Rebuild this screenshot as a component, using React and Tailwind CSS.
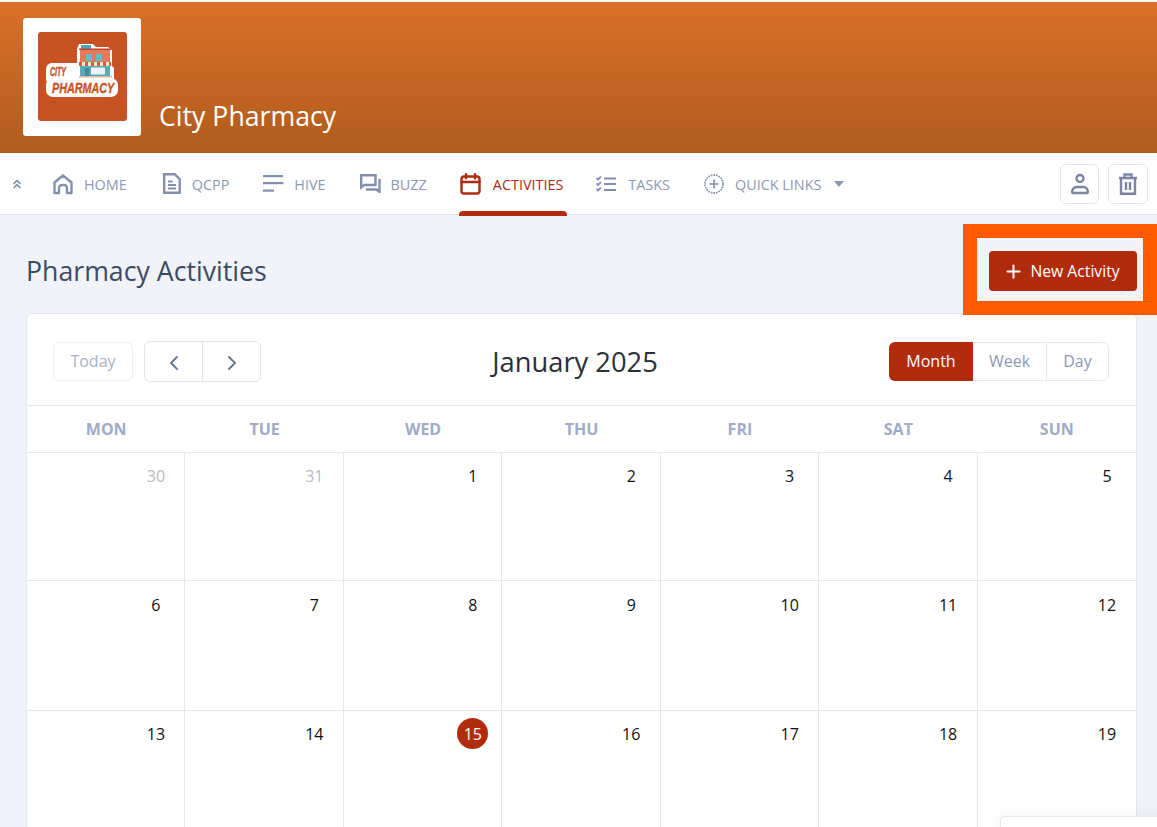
import React from "react";
import { ChevronLeft, ChevronRight, Plus, ChevronsUp } from "lucide-react";

const sans = "font-['Open_Sans','Noto_Sans',sans-serif]";

function Logo() {
  return (
    <svg viewBox="0 0 89 89" className="w-[89px] h-[89px] block">
      <rect width="89" height="89" rx="3" fill="#c65223" />
      <rect x="8" y="31" width="38" height="22" rx="6" fill="#fff" />
      <rect x="8" y="46" width="72" height="19" rx="7" fill="#fff" />
      <path d="M39 49V17l2-5h14l3 3h12l4 3v16l2 2v14z" fill="#fff" />
      <rect x="43" y="13" width="10" height="4" fill="#4aa6b5" />
      <rect x="42" y="17" width="30" height="13" fill="#e8795a" />
      <rect x="41" y="16.500" width="32" height="1.500" fill="#b9452c" />
      <rect x="48" y="22" width="6" height="7" fill="#64bccb" />
      <rect x="58" y="22" width="6" height="7" fill="#64bccb" />
      <rect x="41" y="30" width="32" height="4" fill="#f7e6d4" />
      <path d="M41 30h3v4h-3zM47 30h3v4h-3zM53 30h3v4h-3zM59 30h3v4h-3zM65 30h3v4h-3zM71 30h2v4h-2z" fill="#d9603e" />
      <rect x="42" y="34" width="30" height="11" fill="#5ba9b8" />
      <rect x="53" y="35.500" width="14" height="7" fill="#eef4f2" />
      <rect x="47" y="36" width="4" height="9" fill="#3f8b9c" />
      <rect x="41" y="44" width="33" height="1.500" fill="#d9b9a0" />
      <text transform="translate(12 44) scale(1 1.900)" fontFamily="'Liberation Sans',sans-serif" fontWeight="700" fontStyle="italic" fontSize="7" stroke="#c65223" strokeWidth="0.250" fill="#c65223">CITY</text>
      <text transform="translate(14 61) scale(1 1.350)" fontFamily="'Liberation Sans',sans-serif" fontWeight="700" fontStyle="italic" fontSize="10.800" stroke="#c65223" strokeWidth="0.250" fill="#c65223">PHARMACY</text>
    </svg>
  );
}

const stroke = { fill: "none", stroke: "currentColor", strokeWidth: 2.4, strokeLinecap: "round", strokeLinejoin: "round" };

const HomeIcon = () => (
  <svg width="22" height="22" viewBox="0 0 22 22" {...stroke}>
    <path d="M2.500 20V9.500L11 2.500l8.500 7V20H15v-5a3 3 0 0 0-3-3h-2a3 3 0 0 0-3 3v5z" />
  </svg>
);
const DocIcon = () => (
  <svg width="18" height="21" viewBox="0 0 18 21" {...stroke} strokeLinecap="butt" strokeLinejoin="miter">
    <path d="M1.200 1.200h10.500l5 5v13.600H1.200z" />
    <path d="M5 8.500h4.500M5 12h8M5 15.500h8" strokeWidth="2" />
  </svg>
);
const HiveIcon = () => (
  <svg width="21" height="17" viewBox="0 0 21 17" fill="currentColor">
    <rect x="0" y="0" width="20" height="2.200" />
    <rect x="0" y="7" width="20.500" height="2.200" />
    <rect x="0" y="14.500" width="11" height="2.200" />
  </svg>
);
const BuzzIcon = () => (
  <svg width="21" height="19" viewBox="0 0 21 19" {...stroke} strokeLinecap="butt" strokeLinejoin="miter">
    <path d="M15.500 1.200H1.200v12.300l3-2.500h11.300z" />
    <path d="M19.500 5v13l-3-2.500H6" />
  </svg>
);
const CalIcon = () => (
  <svg width="22" height="22" viewBox="0 0 22 22" {...stroke}>
    <rect x="1.500" y="3.500" width="18" height="17" rx="2.500" />
    <path d="M1.500 9h18M6 1.200v4M15 1.200v4" />
  </svg>
);
const TasksIcon = () => (
  <svg width="20" height="16" viewBox="0 0 20 16" fill="none" stroke="currentColor">
    <path d="M0.500 2l1.500 1.500L5 0.700M0.500 7.500L2 9l3-2.800M0.500 13l1.500 1.500 3-2.800" strokeWidth="1.800" />
    <path d="M8 2.500h12M8 8h12M8 14h12" strokeWidth="2.200" />
  </svg>
);
const QuickIcon = () => (
  <svg width="20" height="20" viewBox="0 0 20 20" fill="none" stroke="currentColor">
    <circle cx="10" cy="10" r="9" strokeWidth="1.800" strokeDasharray="1.600 1" />
    <path d="M10 5.500v9M5.500 10h9" strokeWidth="1.700" />
  </svg>
);
const UserIcon = () => (
  <svg width="20" height="22" viewBox="0 0 20 22" {...stroke}>
    <circle cx="10" cy="5.500" r="3.500" />
    <path d="M2.200 19v-.500a4.500 4.500 0 0 1 4.500-4.500h6.600a4.500 4.500 0 0 1 4.500 4.500v.500a1 1 0 0 1-1 1H3.200a1 1 0 0 1-1-1z" />
  </svg>
);
const TrashIcon = () => (
  <svg width="20" height="22" viewBox="0 0 20 22" {...stroke} strokeLinecap="butt" strokeLinejoin="miter">
    <path d="M1 5h18M6.500 5V1.500h7V5M3 5v15.800h14V5M8 9v8M12 9v8" />
  </svg>
);

const navItems = [
  { label: "HOME", icon: <HomeIcon />, ml: "ml-[28px]", gap: "gap-[10px]" },
  { label: "QCPP", icon: <DocIcon />, ml: "ml-[36px]", gap: "gap-[11px]" },
  { label: "HIVE", icon: <HiveIcon />, ml: "ml-[34px]", gap: "gap-[10px]" },
  { label: "BUZZ", icon: <BuzzIcon />, ml: "ml-[34px]", gap: "gap-[10px]" },
  { label: "ACTIVITIES", icon: <CalIcon />, ml: "ml-[33px]", gap: "gap-[11px]", active: true },
  { label: "TASKS", icon: <TasksIcon />, ml: "ml-[33px]", gap: "gap-[12px]" },
  { label: "QUICK LINKS", icon: <QuickIcon />, ml: "ml-[34px]", gap: "gap-[11px]" },
];

const days = ["MON", "TUE", "WED", "THU", "FRI", "SAT", "SUN"];
const weeks = [
  { h: "h-[128px]", pt: "pt-[7px]", nums: [30, 31, 1, 2, 3, 4, 5] },
  { h: "h-[130px]", pt: "pt-[8px]", nums: [6, 7, 8, 9, 10, 11, 12] },
  { h: "h-[130px]", pt: "pt-[7px]", nums: [13, 14, 15, 16, 17, 18, 19] },
];

export default function App() {
  return (
    <div className={`${sans} relative h-[827px] overflow-hidden bg-[#f1f3f8]`}>
      <div className="h-[2px] bg-white" />
      <header className="h-[151px] bg-gradient-to-b from-[#da7029] to-[#b05c1e] flex pl-[23px] pt-[16px]">
        <div className="w-[118px] h-[118px] rounded-[3px] bg-white flex justify-center pt-[14px]">
          <Logo />
        </div>
        <div className="ml-[18px] mt-[80px] text-[26.700px] leading-[36px] text-white">City Pharmacy</div>
      </header>

      <nav className="relative h-[62px] bg-white border-b border-[#e0e4ee] flex items-center pl-[10px] pr-[9px] text-[#8c98b5]">
        <ChevronsUp size={14} strokeWidth={3} className="text-[#8592b0]" />
        {navItems.map((item) => (
          <div
            key={item.label}
            className={`relative flex items-center ${item.ml} ${item.gap} ${item.active ? "text-[#b02c0c]" : ""}`}
          >
            <span className={`flex items-center justify-center ${item.active ? "" : "text-[#8290ae]"}`}>{item.icon}</span>
            <span className="text-[14.400px] leading-[20px] translate-y-[1px]">{item.label}</span>
            {item.active && (
              <span className="absolute left-[-1px] right-[-4px] top-[38px] h-[5px] rounded-t-[4px] bg-[#b02c0c]" />
            )}
          </div>
        ))}
        <svg width="10" height="6" viewBox="0 0 10 6" className="ml-[13px] text-[#8c98b5]" fill="currentColor">
          <path d="M0 0h10L5 6z" />
        </svg>
        <div className="ml-auto flex gap-[9px] text-[#7985a3]">
          <button className="w-[39px] h-[40px] rounded-[6px] border border-[#e0e4ee] bg-white flex items-center justify-center">
            <UserIcon />
          </button>
          <button className="w-[40px] h-[40px] rounded-[6px] border border-[#e0e4ee] bg-white flex items-center justify-center">
            <TrashIcon />
          </button>
        </div>
      </nav>

      <main className="pl-[26px] pr-[20px]">
        <div className="relative z-10 flex items-center justify-between pt-[9px] -mb-[2px]">
          <h1 className="text-[26.700px] leading-[36px] text-[#3c4b64] font-normal translate-y-[1px]">Pharmacy Activities</h1>
          <div className="-mr-[20px] w-[194px] h-[91px] border-[14px] border-[#ff5a00] pl-[12px] pt-[13px]">
            <button className="w-[148px] h-[40px] rounded-[4px] bg-[#b02c0c] text-white text-[15.700px] flex items-center pl-[13.500px] gap-[7px]">
              <Plus size={21} strokeWidth={2.200} />
              <span className="translate-y-[1px]">New Activity</span>
            </button>
          </div>
        </div>

        <section className="bg-white rounded-t-[6px] border border-[#e4e7f0]">
          <div className="h-[91px] flex items-center justify-between pl-[26px] pr-[27px] pt-[3px]">
            <div className="flex items-center gap-[11px]">
              <button className="w-[80px] h-[39px] rounded-[6px] border border-[#eceef4] text-[#a9b1c7] text-[16px]">Today</button>
              <div className="h-[41px] w-[117px] rounded-[6px] border border-[#e0e4ee] flex text-[#667799]">
                <button className="w-[58px] border-r border-[#e0e4ee] flex items-center justify-center pt-[3px]">
                  <ChevronLeft size={24} strokeWidth={1.900} />
                </button>
                <button className="flex-1 flex items-center justify-center pt-[3px]">
                  <ChevronRight size={24} strokeWidth={1.900} />
                </button>
              </div>
            </div>
            <h2 className="text-[27.300px] leading-[36px] text-[#2b2f38] font-normal translate-y-[1px]">January 2025</h2>
            <div className="flex justify-end">
              <div className="h-[39px] flex rounded-[6px] border border-[#e4e7f0] text-[16px] text-[#8c98b5]">
                <button className="w-[84px] -m-px h-[39px] rounded-l-[6px] bg-[#b02c0c] text-white">Month</button>
                <button className="w-[74px] ml-px border-r border-[#e4e7f0]">Week</button>
                <button className="w-[61px]">Day</button>
              </div>
            </div>
          </div>

          <div className="grid grid-cols-7 h-[48px] border-y border-[#e4e7f0] items-center text-center">
            {days.map((d) => (
              <div key={d} className="text-[16px] font-bold text-[#a0abc6]">{d}</div>
            ))}
          </div>

          {weeks.map((week, w) => (
            <div key={w} className={`grid grid-cols-7 ${week.h} border-b border-[#e4e7f0]`}>
              {week.nums.map((n, i) => (
                <div key={i} className={`flex justify-end ${week.pt} ${i < 6 ? "pr-[13px] border-r border-[#e4e7f0]" : "pr-[13.500px]"}`}>
                  <span
                    className={`w-[31px] h-[31px] rounded-full flex items-center justify-center text-[16px] ${
                      n === 15 ? "bg-[#b02c0c] text-white" : w === 0 && i < 2 ? "text-[#b9bcbf]" : "text-[#111]"
                    }`}
                  >
                    {n}
                  </span>
                </div>
              ))}
            </div>
          ))}
        </section>
      </main>

      <div className="absolute left-[1000px] top-[816px] w-[200px] h-[60px] bg-white border border-[#e4e7f0] rounded-tl-[4px] shadow-[0_0_20px_rgba(0,0,0,0.05)]" />
    </div>
  );
}
